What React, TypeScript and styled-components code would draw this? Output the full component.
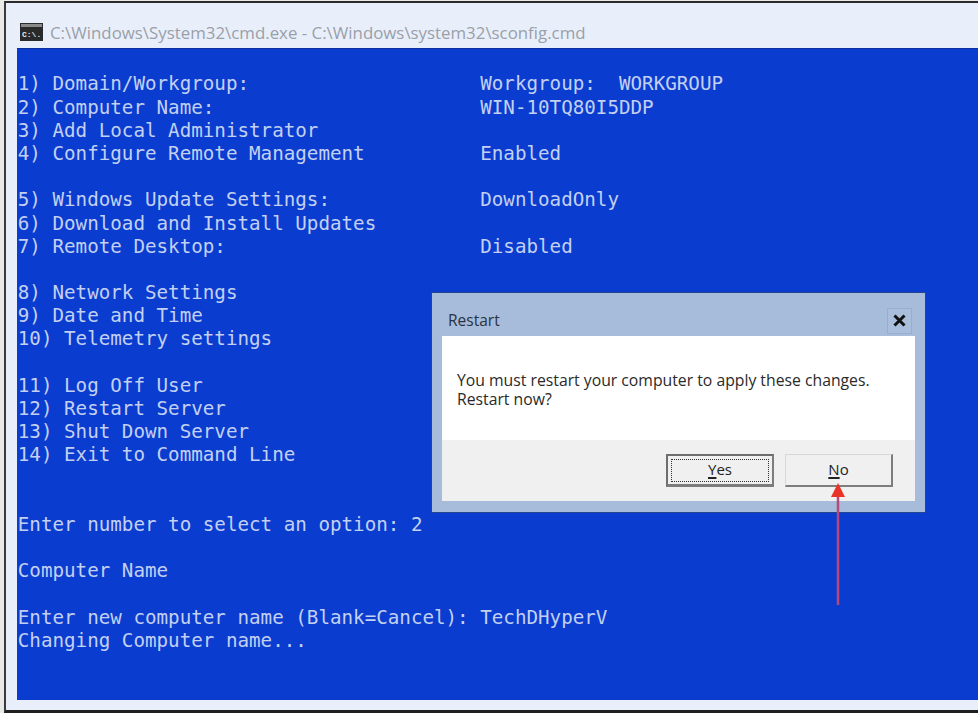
import React from "react";
import styled, { createGlobalStyle } from "styled-components";

const Global = createGlobalStyle`
  html, body {
    margin: 0;
    padding: 0;
    background: #e9e9e6;
  }
`;

const lines = [
  "1) Domain/Workgroup:                    Workgroup:  WORKGROUP",
  "2) Computer Name:                       WIN-10TQ80I5DDP",
  "3) Add Local Administrator",
  "4) Configure Remote Management          Enabled",
  "",
  "5) Windows Update Settings:             DownloadOnly",
  "6) Download and Install Updates",
  "7) Remote Desktop:                      Disabled",
  "",
  "8) Network Settings",
  "9) Date and Time",
  "10) Telemetry settings",
  "",
  "11) Log Off User",
  "12) Restart Server",
  "13) Shut Down Server",
  "14) Exit to Command Line",
  "",
  "",
  "Enter number to select an option: 2",
  "",
  "Computer Name",
  "",
  "Enter new computer name (Blank=Cancel): TechDHyperV",
  "Changing Computer name...",
];

const Page = styled.div`
  position: relative;
  width: 978px;
  height: 713px;
  overflow: hidden;
  padding-top: 1px;
  box-sizing: border-box;
`;

const Frame = styled.div`
  height: 712px;
  box-sizing: border-box;
  display: flex;
  flex-direction: column;
  background: #e8effb;
  border-top: 2px solid #2b2b2b;
  border-bottom: 3px solid #1f1f1f;
  border-left: 2px solid #3a3a3a;
  margin-left: 4px;
  padding-left: 11px;
`;

const TitleBar = styled.div`
  height: 45px;
  flex: none;
  box-sizing: border-box;
  display: flex;
  align-items: center;
  gap: 7px;
  padding: 13px 0 0 3px;
`;

const TitleText = styled.span`
  font-family: "Open Sans", "Noto Sans", sans-serif;
  font-size: 16.85px;
  color: #9a9fa8;
  white-space: pre;
`;

const Console = styled.div`
  height: 652px;
  flex: none;
  box-sizing: border-box;
  background: #0a3dcf;
  padding-top: 23.4px;
  padding-left: 0.8px;
  border-top: 1px solid #0d2f9c;
`;

const ConsoleLine = styled.div`
  font-family: "DejaVu Sans Mono", "Liberation Mono", monospace;
  font-size: 19.22px;
  line-height: 23.2px;
  height: 23.2px;
  color: #c3d0f2;
  white-space: pre;
`;

const Dialog = styled.div`
  position: absolute;
  left: 431px;
  top: 292px;
  width: 495px;
  height: 221px;
  box-sizing: border-box;
  background: #a6bcda;
  border: 1px solid #23468f;
  padding: 0 10px 11px;
  display: flex;
  flex-direction: column;
`;

const DialogHeader = styled.div`
  height: 43px;
  flex: none;
  display: flex;
  align-items: center;
  justify-content: space-between;
  padding-left: 6px;
`;

const DialogTitle = styled.span`
  font-family: "Open Sans", "Noto Sans", sans-serif;
  font-size: 15.5px;
  color: #2b3340;
  margin-top: 10px;
`;

const CloseButton = styled.div`
  width: 25px;
  height: 26px;
  margin: 12px 3px 0 0;
  box-sizing: border-box;
  display: flex;
  align-items: center;
  justify-content: center;
  background: #a9bedb;
  border: 1px solid #98aecd;
`;

const DialogBody = styled.div`
  height: 104px;
  flex: none;
  box-sizing: border-box;
  background: #ffffff;
  padding: 35px 0 0 15px;
  font-family: "Open Sans", "Noto Sans", sans-serif;
  font-size: 15.75px;
  line-height: 19px;
  color: #2a2a2a;
`;

const DialogFooter = styled.div`
  flex: 1;
  background: #f0f0f0;
  display: flex;
  justify-content: flex-end;
  align-items: flex-start;
  gap: 11px;
  padding: 14px 22px 0 0;
`;

const DialogButton = styled.div<{ $focused?: boolean }>`
  width: 108px;
  height: 33px;
  box-sizing: border-box;
  display: flex;
  align-items: center;
  justify-content: center;
  padding-bottom: 2px;
  font-family: "Open Sans", "Noto Sans", sans-serif;
  font-size: 15px;
  color: #222;
  background: #f0f0f0;
  border: ${(p) => (p.$focused ? "2px solid #6e6e6e" : "1px solid #d8d8d8")};
  border-right: 2px solid #7d7d7d;
  border-bottom: ${(p) => (p.$focused ? "3px" : "2px")} solid #7d7d7d;
  outline: ${(p) => (p.$focused ? "1px dotted #333" : "none")};
  outline-offset: -6px;

  u {
    text-underline-offset: 2px;
    text-decoration-thickness: 2px;
  }
`;

const Arrow = styled.svg`
  position: absolute;
  left: 826px;
  top: 480px;
`;

const ConsoleIcon = () => (
  <svg width="23" height="18" viewBox="0 0 23 18">
    <rect width="23" height="18" fill="#2a2a2a" />
    <rect x="1" y="1" width="21" height="3" fill="#8a8a8a" />
    <text x="2" y="14" fontFamily="Liberation Mono, monospace" fontSize="8" fontWeight="700" fill="#e8e8e8">
      C:\.
    </text>
  </svg>
);

export default function App() {
  return (
    <>
      <Global />
      <Page>
        <Frame>
          <TitleBar>
            <ConsoleIcon />
            <TitleText>C:\Windows\System32\cmd.exe - C:\Windows\system32\sconfig.cmd</TitleText>
          </TitleBar>
          <Console>
            {lines.map((line, i) => (
              <ConsoleLine key={i}>{line}</ConsoleLine>
            ))}
          </Console>
        </Frame>
        <Dialog>
          <DialogHeader>
            <DialogTitle>Restart</DialogTitle>
            <CloseButton>
              <svg width="13" height="13" viewBox="0 0 13 13">
                <path d="M1.5 1.5 L11.5 11.5 M11.5 1.5 L1.5 11.5" stroke="#111" strokeWidth="3" />
              </svg>
            </CloseButton>
          </DialogHeader>
          <DialogBody>
            You must restart your computer to apply these changes.
            <br />
            Restart now?
          </DialogBody>
          <DialogFooter>
            <DialogButton $focused>
              <span>
                <u>Y</u>es
              </span>
            </DialogButton>
            <DialogButton>
              <span>
                <u>N</u>o
              </span>
            </DialogButton>
          </DialogFooter>
        </Dialog>
        <Arrow width="24" height="128" viewBox="0 0 24 128">
          <line x1="12" y1="14" x2="12" y2="125" stroke="#b8477a" strokeWidth="2.5" />
          <polygon points="12,3 19,17 5,17" fill="#ea3328" />
        </Arrow>
      </Page>
    </>
  );
}
